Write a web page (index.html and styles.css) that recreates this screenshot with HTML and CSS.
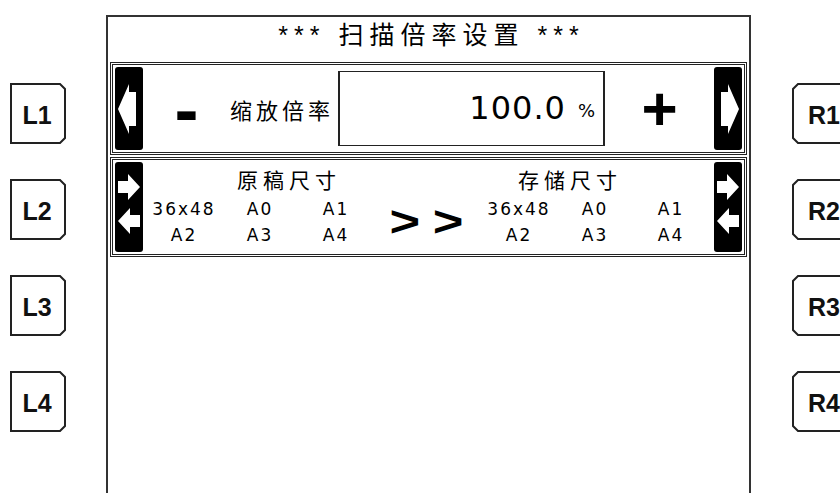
FILE: index.html
```html
<!DOCTYPE html>
<html lang="zh-CN">
<head>
    <meta charset="UTF-8">
    <title>扫描倍率设置</title>
    <link rel="stylesheet" href="styles.css">
</head>
<body>
    <div class="screen">
        <div class="side side-left">
            <svg class="key" viewBox="0 0 56 61"><polygon points="1,1 50,1 55,6 55,55 50,60 1,60"/><text x="27" y="41" text-anchor="middle">L1</text></svg>
            <svg class="key" viewBox="0 0 56 61"><polygon points="1,1 50,1 55,6 55,55 50,60 1,60"/><text x="27" y="41" text-anchor="middle">L2</text></svg>
            <svg class="key" viewBox="0 0 56 61"><polygon points="1,1 50,1 55,6 55,55 50,60 1,60"/><text x="27" y="41" text-anchor="middle">L3</text></svg>
            <svg class="key" viewBox="0 0 56 61"><polygon points="1,1 50,1 55,6 55,55 50,60 1,60"/><text x="27" y="41" text-anchor="middle">L4</text></svg>
        </div>

        <main class="frame">
            <h1 class="title">*** 扫描倍率设置 ***</h1>

            <section class="panel zoom-panel">
                <div class="nav-btn">
                    <svg width="28" height="83" viewBox="0 0 28 83"><polygon points="3,42 14,17 14,25 21,25 21,59 14,59 14,67"/></svg>
                </div>
                <div class="minus">-</div>
                <div class="zoom-label">缩放倍率</div>
                <div class="zoom-box"><span class="zoom-value">100.0</span><span class="unit">%</span></div>
                <div class="plus">+</div>
                <div class="nav-btn">
                    <svg width="28" height="83" viewBox="0 0 28 83"><polygon points="25,42 14,17 14,25 7,25 7,59 14,59 14,67"/></svg>
                </div>
            </section>

            <section class="panel size-panel">
                <div class="nav-btn">
                    <svg width="28" height="90" viewBox="0 0 28 90">
                        <polygon points="3,19 13,19 13,12 25,25 13,38 13,31 3,31"/>
                        <polygon points="25,53 15,53 15,46 3,59 15,72 15,65 25,65"/>
                    </svg>
                </div>
                <div class="size-group src">
                    <div class="group-title">原稿尺寸</div>
                    <div class="size-grid">
                        <span>36x48</span><span>A0</span><span>A1</span>
                        <span>A2</span><span>A3</span><span>A4</span>
                    </div>
                </div>
                <div class="arrow-sep"><span>&gt;&gt;</span></div>
                <div class="size-group dst">
                    <div class="group-title">存储尺寸</div>
                    <div class="size-grid">
                        <span>36x48</span><span>A0</span><span>A1</span>
                        <span>A2</span><span>A3</span><span>A4</span>
                    </div>
                </div>
                <div class="nav-btn">
                    <svg width="28" height="90" viewBox="0 0 28 90">
                        <polygon points="3,19 13,19 13,12 25,25 13,38 13,31 3,31"/>
                        <polygon points="25,53 15,53 15,46 3,59 15,72 15,65 25,65"/>
                    </svg>
                </div>
            </section>
        </main>

        <div class="side side-right">
            <svg class="key" viewBox="0 0 56 61"><polygon points="6,1 55,1 55,60 6,60 1,55 1,6"/><text x="16" y="41">R1</text></svg>
            <svg class="key" viewBox="0 0 56 61"><polygon points="6,1 55,1 55,60 6,60 1,55 1,6"/><text x="16" y="41">R2</text></svg>
            <svg class="key" viewBox="0 0 56 61"><polygon points="6,1 55,1 55,60 6,60 1,55 1,6"/><text x="16" y="41">R3</text></svg>
            <svg class="key" viewBox="0 0 56 61"><polygon points="6,1 55,1 55,60 6,60 1,55 1,6"/><text x="16" y="41">R4</text></svg>
        </div>
    </div>
</body>
</html>
```

FILE: styles.css
```css
body {
    margin: 0;
    background: #fff;
    color: #000;
    font-family: "Noto Sans CJK SC", "DejaVu Sans", sans-serif;
    overflow: hidden;
}

.screen {
    display: flex;
    width: 840px;
    height: 493px;
    overflow: hidden;
}

/* soft keys on both sides */
.side {
    display: flex;
    flex-direction: column;
    gap: 35px;
    padding-top: 83px;
    box-sizing: border-box;
    flex-shrink: 0;
}

.side-left {
    width: 106px;
    padding-left: 10px;
}

.side-right {
    width: 89px;
    padding-left: 41px;
}

.key {
    display: block;
    width: 56px;
    height: 61px;
    flex-shrink: 0;
}

.key polygon {
    fill: #fff;
    stroke: #222;
    stroke-width: 2;
}

.key text {
    font-family: "Liberation Sans", Arial, sans-serif;
    font-weight: bold;
    font-size: 25px;
    fill: #111;
}

/* main screen */
.frame {
    width: 645px;
    height: 500px;
    margin-top: 15px;
    border: 2px solid #333;
    border-bottom: none;
    box-sizing: border-box;
    flex-shrink: 0;
}

.title {
    margin: 0 0 9px;
    padding-left: 6px;
    height: 36px;
    line-height: 36px;
    text-align: center;
    font-family: "Liberation Sans", "Noto Sans CJK SC", sans-serif;
    font-size: 25px;
    font-weight: normal;
    letter-spacing: 6px;
}

.panel {
    display: flex;
    margin: 0 2px;
    padding: 2px;
    border: 3px double #222;
    box-sizing: border-box;
}

.zoom-panel {
    height: 93px;
    align-items: center;
}

.size-panel {
    height: 100px;
    margin-top: 2px;
}

.nav-btn {
    width: 28px;
    align-self: stretch;
    background: #000;
    border-radius: 3px;
    flex-shrink: 0;
}

.nav-btn svg {
    display: block;
}

.nav-btn polygon {
    fill: #fff;
}

.minus {
    width: 87px;
    text-align: center;
    font: bold 72px/1 "Liberation Sans", sans-serif;
}

.zoom-label {
    font-size: 22px;
    letter-spacing: 4px;
    white-space: nowrap;
}

.zoom-box {
    width: 267px;
    height: 75px;
    margin-left: 4px;
    padding-right: 8px;
    box-sizing: border-box;
    border: 1px solid #222;
    border-left-width: 2px;
    border-right-width: 2px;
    text-align: right;
    font-family: "DejaVu Sans", sans-serif;
    font-size: 32px;
    line-height: 73px;
}

.zoom-value {
    letter-spacing: 1px;
}

.unit {
    margin-left: 12px;
    font-size: 18px;
    vertical-align: 2px;
}

.plus {
    flex: 1;
    text-align: center;
    font: bold 62px/1 "Liberation Sans", sans-serif;
}

.size-group {
    padding-top: 3px;
    box-sizing: border-box;
    flex-shrink: 0;
}

.src {
    width: 230px;
    padding-left: 2px;
}

.dst {
    width: 234px;
}

.group-title {
    font-size: 21px;
    line-height: 28px;
    letter-spacing: 5px;
    white-space: nowrap;
}

.src .group-title {
    margin-left: 92px;
}

.dst .group-title {
    margin-left: 38px;
}

.size-grid {
    display: grid;
    grid-template-columns: repeat(3, 76px);
    margin-top: 3px;
    font: 17px/26px "DejaVu Sans", sans-serif;
    letter-spacing: 2px;
    text-indent: 2px;
    text-align: center;
}

.arrow-sep {
    flex: 1;
    padding-top: 40px;
    text-align: center;
}

.arrow-sep span {
    display: inline-block;
    font: bold 42px/40px "Liberation Sans", sans-serif;
    letter-spacing: 10px;
    text-indent: 10px;
    transform: scaleX(1.25);
}
```
